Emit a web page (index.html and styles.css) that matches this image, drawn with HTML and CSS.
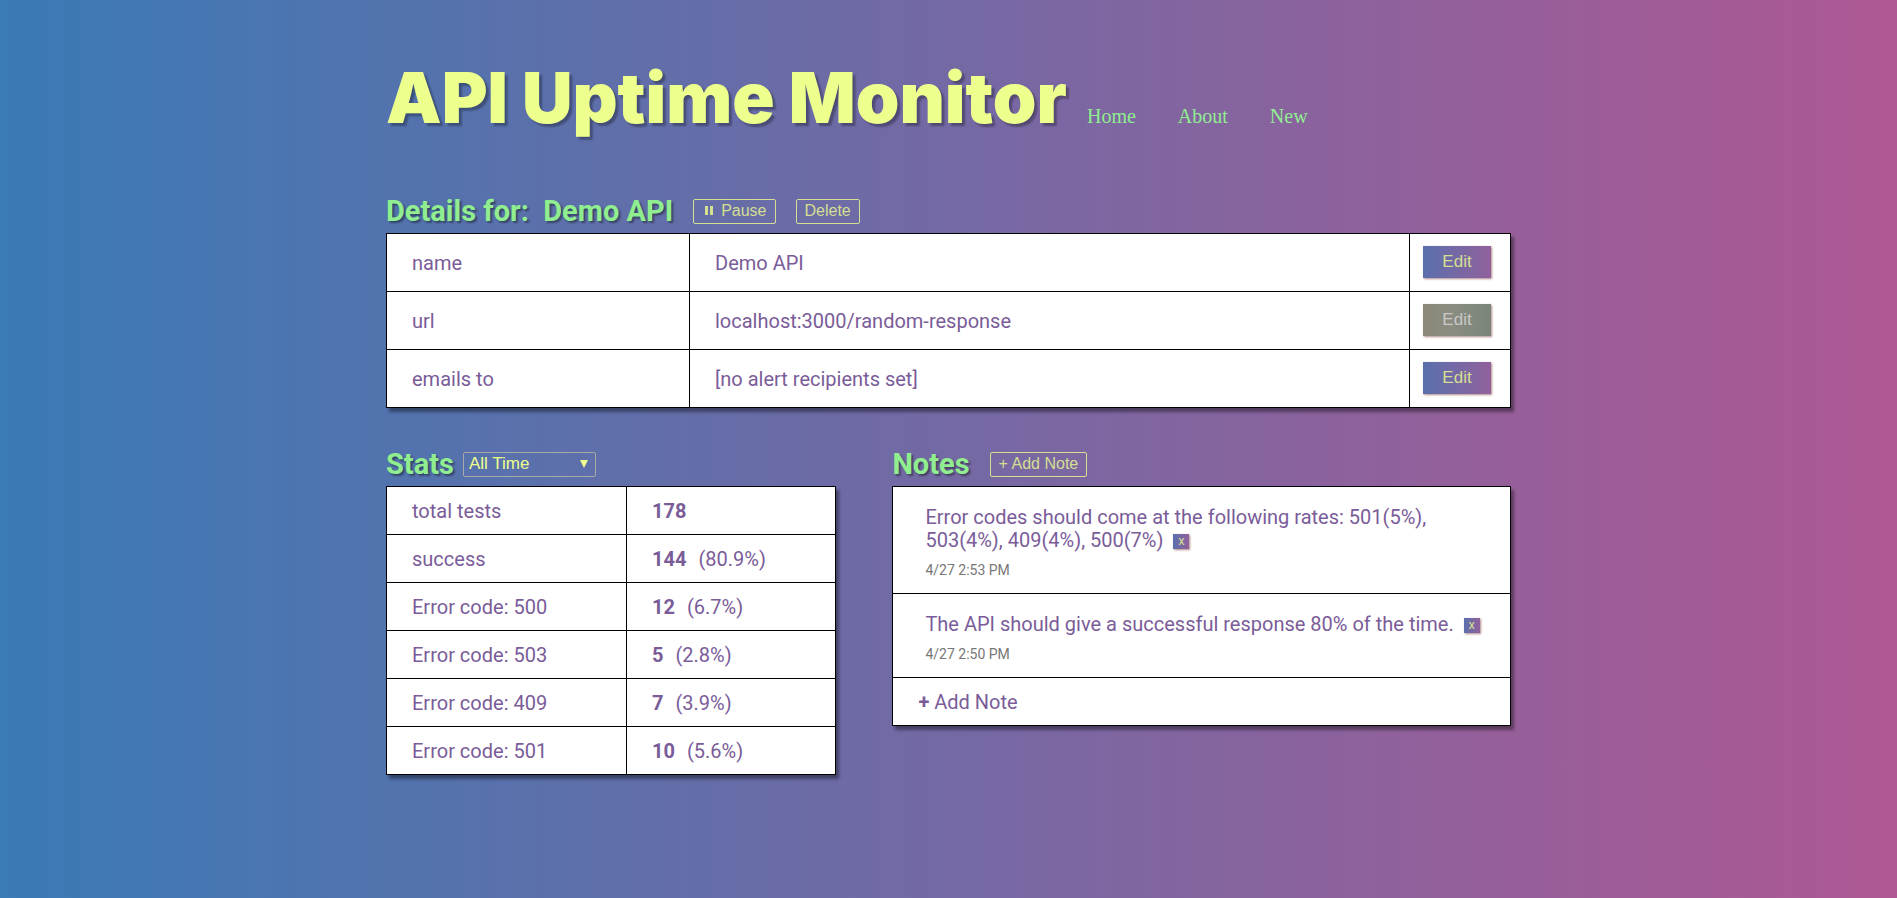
FILE: index.html
```html
<!DOCTYPE html>
<html lang="en">
<head>
<meta charset="utf-8">
<title>API Uptime Monitor</title>
<link rel="stylesheet" href="styles.css">
</head>
<body>
<div class="page">
  <header class="site-header">
    <h1 class="site-title">API Uptime Monitor</h1>
    <nav class="site-nav">
      <a href="#home">Home</a>
      <a href="#about">About</a>
      <a href="#new">New</a>
    </nav>
  </header>

  <main>
    <section class="details">
      <div class="section-head">
        <h2>Details for: &nbsp;Demo API</h2>
        <button type="button" class="outline-btn"><svg class="pause-icon" viewBox="0 0 9 9" aria-hidden="true"><path d="M0 0h3v9H0zM5 0h3v9H5z"/></svg>Pause</button>
        <button type="button" class="outline-btn">Delete</button>
      </div>
      <table class="panel details-table">
        <tr><td class="key">name</td><td>Demo API</td><td class="action"><button type="button" class="edit-btn">Edit</button></td></tr>
        <tr><td class="key">url</td><td>localhost:3000/random-response</td><td class="action"><button type="button" class="edit-btn" disabled>Edit</button></td></tr>
        <tr><td class="key">emails to</td><td>[no alert recipients set]</td><td class="action"><button type="button" class="edit-btn">Edit</button></td></tr>
      </table>
    </section>

    <div class="columns">
      <section class="stats">
        <div class="section-head">
          <h2>Stats</h2>
          <div class="range">
            <select class="range-select" aria-label="Time range"><option>All Time</option></select>
            <svg class="range-arrow" viewBox="0 0 8 8" aria-hidden="true"><path d="M0 0h8L4 8z"/></svg>
          </div>
        </div>
        <table class="panel stats-table">
          <tr><td class="label">total tests</td><td><b>178</b></td></tr>
          <tr><td class="label">success</td><td><b>144</b>(80.9%)</td></tr>
          <tr><td class="label">Error code: 500</td><td><b>12</b>(6.7%)</td></tr>
          <tr><td class="label">Error code: 503</td><td><b>5</b>(2.8%)</td></tr>
          <tr><td class="label">Error code: 409</td><td><b>7</b>(3.9%)</td></tr>
          <tr><td class="label">Error code: 501</td><td><b>10</b>(5.6%)</td></tr>
        </table>
      </section>

      <section class="notes">
        <div class="section-head">
          <h2>Notes</h2>
          <button type="button" class="outline-btn">+ Add Note</button>
        </div>
        <div class="panel notes-list">
          <article class="note">
            <p class="note-text">Error codes should come at the following rates: 501(5%), 503(4%), 409(4%), 500(7%)<button type="button" class="remove-btn" aria-label="Remove note">x</button></p>
            <time class="note-time">4/27 2:53 PM</time>
          </article>
          <article class="note">
            <p class="note-text">The API should give a successful response 80% of the time.<button type="button" class="remove-btn" aria-label="Remove note">x</button></p>
            <time class="note-time">4/27 2:50 PM</time>
          </article>
          <button type="button" class="note-add"><b>+</b> Add Note</button>
        </div>
      </section>
    </div>
  </main>
</div>
</body>
</html>
```
FILE: styles.css
```css
* {
  box-sizing: border-box;
}

body {
  margin: 0;
  min-height: 100vh;
  background: linear-gradient(to right, #3a7ab5, #ae5893);
  color: #7a5c99;
  font: 20px/24px Roboto, sans-serif;
}

.page {
  max-width: 1125px;
  margin: 0 auto;
  padding: 50px 0;
}

h1,
h2,
p {
  margin: 0;
}

.site-header {
  display: flex;
  align-items: baseline;
  gap: 20px;
}

.site-title {
  color: #edff8c;
  font: 900 70px/96px Inter, sans-serif;
  text-shadow: 3px 3px 2px rgba(0, 0, 0, 0.3);
}

.site-nav {
  display: flex;
  gap: 42px;
  font: 20px/24px "Liberation Serif", serif;
}

.site-nav a {
  color: lightgreen;
  text-decoration: none;
}

.details {
  margin-top: 46px;
}

.section-head {
  display: flex;
  align-items: center;
  min-height: 41px;
  padding-bottom: 3px;
}

h2 {
  color: lightgreen;
  font: 700 29px/36px Roboto, sans-serif;
  text-shadow: 2px 2px 2px rgba(0, 0, 0, 0.4);
}

.outline-btn {
  height: 25px;
  margin-left: 20px;
  padding: 0 8px;
  border: 1px solid #d4df92;
  border-radius: 2px;
  background: transparent;
  color: #d4df92;
  font: 16px/20px "Liberation Sans", Arial, sans-serif;
}

.pause-icon {
  width: 9px;
  height: 9px;
  margin: 0 7px 1px 3px;
  fill: currentColor;
}

.panel {
  width: 100%;
  background: #fff;
  box-shadow: 3px 4px 3px rgba(0, 0, 0, 0.4);
}

table {
  border-collapse: collapse;
}

td {
  border: 1px solid #000;
  padding: 0 25px;
}

.details-table td {
  height: 58px;
}

.details-table .key {
  width: 303px;
}

.details-table .action {
  width: 101px;
  padding: 0 0 2px 13px;
}

.edit-btn {
  display: block;
  width: 68px;
  height: 32px;
  padding: 0;
  border: 0;
  background: linear-gradient(to right, #5a70ad, #91619c);
  box-shadow: 1px 1px 2px rgba(100, 20, 20, 0.5);
  color: #d4df92;
  font: 17px/20px "Liberation Sans", Arial, sans-serif;
}

.edit-btn:disabled {
  background: linear-gradient(to right, #8b8678, #8b8d80 40%, #7a857a);
  color: #c8c8c8;
}

.columns {
  display: grid;
  grid-template-columns: 450fr 618fr;
  gap: 56px;
  align-items: start;
  margin-top: 37px;
}

.range {
  display: grid;
  align-items: center;
  margin-left: 9px;
}

.range-select {
  grid-area: 1 / 1;
  width: 133px;
  height: 25px;
  padding: 0 5px;
  border: 1px solid #a9a9a9;
  border-radius: 2px;
  appearance: none;
  background: transparent;
  color: #edff8c;
  font: 17px/20px "Liberation Sans", Arial, sans-serif;
}

.range-arrow {
  grid-area: 1 / 1;
  justify-self: end;
  width: 8px;
  height: 8px;
  margin-right: 8px;
  fill: #edff8c;
  pointer-events: none;
}

.stats-table td {
  height: 48px;
}

.stats-table .label {
  width: 240px;
}

.stats-table b {
  margin-right: 12px;
}

.notes-list {
  border: 1px solid #000;
}

.note {
  padding: 19px 20px 11px 32px;
  border-bottom: 1px solid #000;
}

.note-text {
  line-height: 23px;
}

.note-time {
  display: block;
  margin-top: 6px;
  color: #777;
  font-size: 14px;
}

.remove-btn {
  width: 16px;
  height: 15px;
  margin-left: 10px;
  padding: 0;
  border: 0;
  background: linear-gradient(to right, #5a70ad, #91619c);
  box-shadow: 1px 1px 2px rgba(100, 20, 20, 0.5);
  color: #d4df92;
  font: 13px/14px Roboto, sans-serif;
  vertical-align: 2px;
}

.note-add {
  display: block;
  width: 100%;
  height: 47px;
  padding: 0 25px;
  border: 0;
  background: transparent;
  color: inherit;
  font: inherit;
  text-align: left;
}
```
